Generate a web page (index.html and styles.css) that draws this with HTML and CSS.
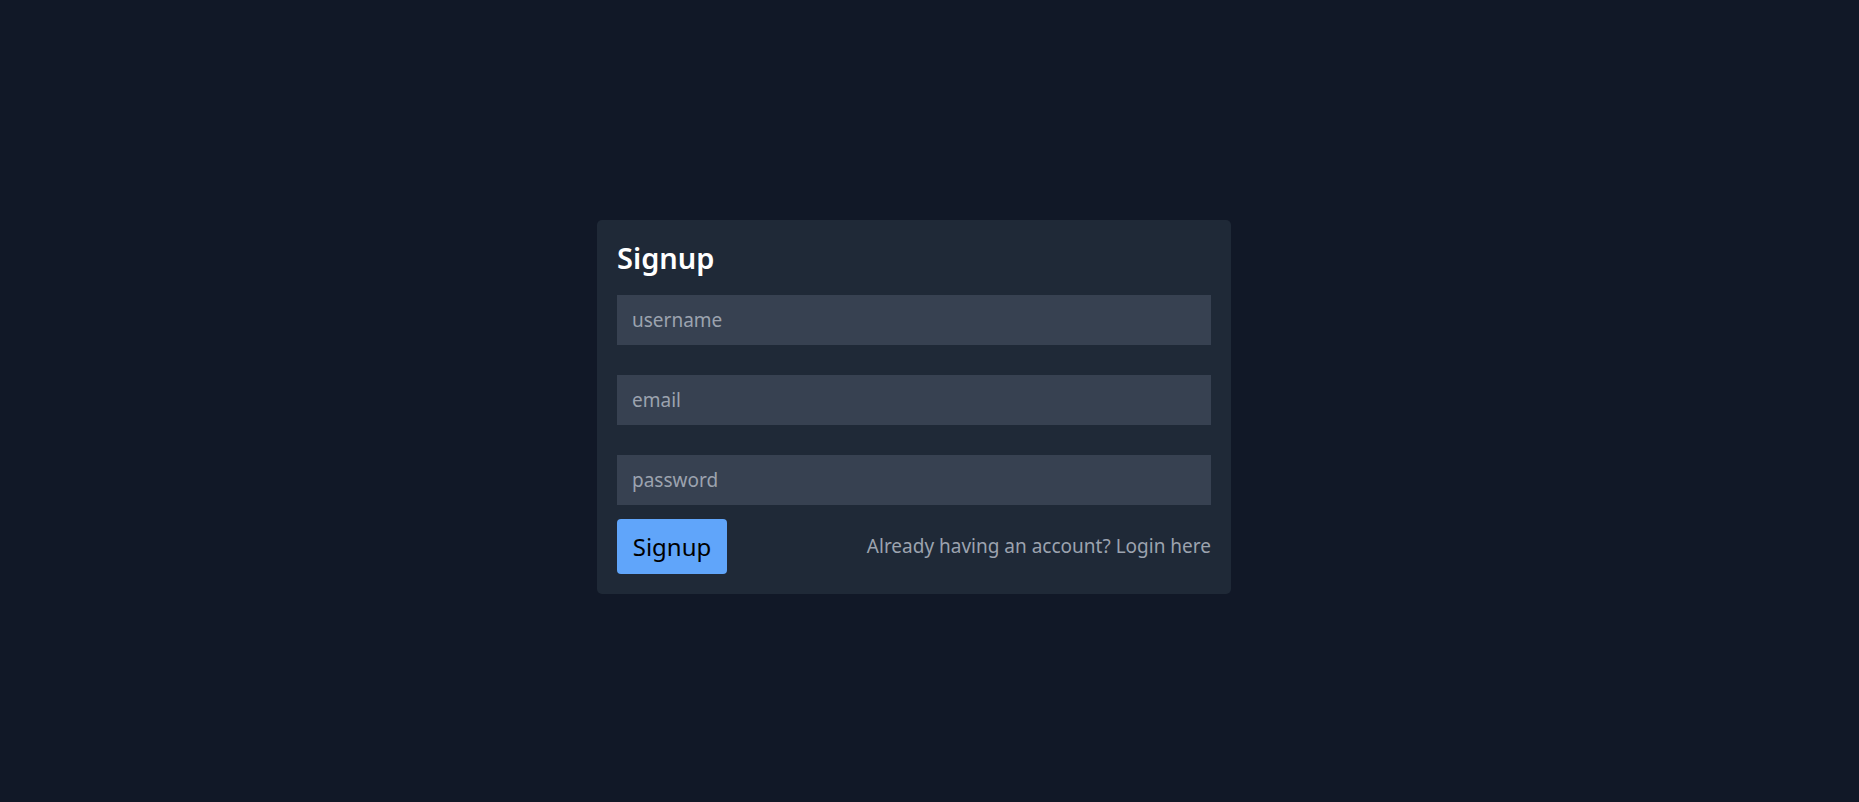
FILE: index.html
```html
<!DOCTYPE html>
<html lang="en">
<head>
<meta charset="utf-8">
<title>Signup</title>
<link rel="stylesheet" href="styles.css">
</head>
<body>
<main class="page">
  <form class="card">
    <h1 class="title">Signup</h1>
    <input class="field" type="text" placeholder="username">
    <input class="field" type="email" placeholder="email">
    <input class="field" type="password" placeholder="password">
    <div class="actions">
      <button class="btn" type="button">Signup</button>
      <a class="login" href="#">Already having an account? Login here</a>
    </div>
  </form>
</main>
</body>
</html>
```
FILE: styles.css
```css
* { box-sizing: border-box; }
html, body { margin: 0; height: 100%; }
body {
  background: #111827;
  font-family: "Noto Sans", "Open Sans", sans-serif;
}
.page {
  height: 100%;
  display: flex;
  align-items: center;
  justify-content: center;
  padding: 11px 31px 0 0;
}
.card {
  width: 634px;
  background: #1f2937;
  border-radius: 5px;
  padding: 20px;
  display: flex;
  flex-direction: column;
}
.title {
  margin: 0 0 19px;
  font-size: 29px;
  line-height: 36px;
  font-weight: 600;
  color: #ffffff;
}
.field {
  height: 50px;
  border: 0;
  outline: none;
  background: #374151;
  color: #e5e7eb;
  font-family: inherit;
  font-size: 19px;
  padding: 0 15px;
  margin-bottom: 30px;
}
.field:last-of-type { margin-bottom: 14px; }
.field::placeholder { color: #9ca3af; }
.actions {
  display: flex;
  align-items: center;
  justify-content: space-between;
}
.btn {
  height: 55px;
  width: 110px;
  border: 0;
  border-radius: 4px;
  background: #60a5fa;
  color: #000;
  font-family: inherit;
  font-size: 24px;
  padding: 0 15px;
}
.login {
  color: #9ca3af;
  text-decoration: none;
  font-size: 19px;
}
```
